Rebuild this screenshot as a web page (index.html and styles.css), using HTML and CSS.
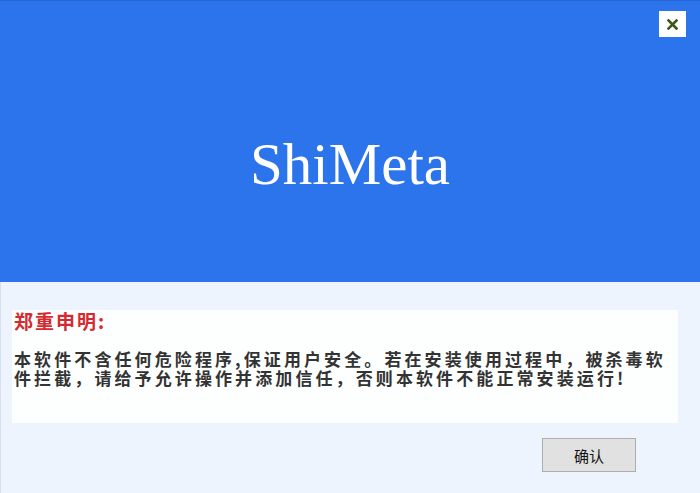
FILE: index.html
```html
<!DOCTYPE html>
<html lang="zh-CN">
<head>
    <meta charset="UTF-8">
    <meta name="viewport" content="width=device-width, initial-scale=1.0">
    <title>ShiMeta</title>
    <link rel="stylesheet" href="styles.css">
</head>
<body>

    <div class="Top">
        <h1>ShiMeta</h1>
        <button class="Close" aria-label="关闭">
            <svg width="11" height="11" viewBox="0 0 11 11">
                <path d="M1.5 1.5 L9.5 9.5 M9.5 1.5 L1.5 9.5" stroke="#3d5716" stroke-width="2.6" stroke-linecap="square"/>
            </svg>
        </button>
    </div>

    <div class="Bottom">

        <div class="Panel">
            <h2>郑重申明:</h2>
            <p>本软件不含任何危险程序,保证用户安全。若在安装使用过程中，被杀毒软<br>件拦截，请给予允许操作并添加信任，否则本软件不能正常安装运行!</p>
        </div>

        <div class="Actions">
            <button>确认</button>
        </div>

    </div>

</body>
</html>
```
FILE: styles.css
```css
body {
    margin: 0;
    width: 700px;
    height: 493px;
    overflow: hidden;
    background: #eef4fd;
    font-family: "Noto Sans CJK SC", "Liberation Sans", sans-serif;
}

div.Top {
    position: relative;
    height: 282px;
    background: #2b74eb;
    border-top: 1px solid #2566d4;
    box-sizing: border-box;
    display: flex;
    justify-content: center;
}

div.Top h1 {
    margin: 0;
    padding-top: 129px;
    font-family: "Liberation Serif", "Times New Roman", serif;
    font-weight: normal;
    font-size: 59px;
    line-height: 68px;
    color: #ffffff;
}

div.Top button.Close {
    position: absolute;
    top: 10px;
    right: 14px;
    width: 27px;
    height: 26px;
    padding: 0;
    border: none;
    background: #ffffff;
    display: flex;
    align-items: center;
    justify-content: center;
}

div.Bottom {
    height: 211px;
    border-left: 1px solid #d6dfeb;
    box-sizing: border-box;
    padding: 28px 22px 0 11px;
}

div.Panel {
    height: 113px;
    background: #fdfefe;
    padding: 0 0 0 2px;
    box-sizing: border-box;
}

div.Panel h2 {
    margin: 0;
    font-size: 19px;
    line-height: 22px;
    letter-spacing: 2px;
    font-weight: bold;
    color: #d52a2f;
}

div.Panel p {
    margin: 0;
    padding-top: 17px;
    font-size: 17px;
    line-height: 19px;
    letter-spacing: 3.1px;
    font-weight: bold;
    color: #333333;
    white-space: nowrap;
}

div.Actions {
    display: flex;
    padding: 15px 42px 0 0;
    justify-content: flex-end;
}

div.Actions button {
    width: 94px;
    height: 34px;
    border: 1px solid #adadad;
    background: #e1e1e1;
    font-family: "Noto Sans CJK SC", sans-serif;
    font-size: 15px;
    color: #111111;
    padding: 0;
}
```
